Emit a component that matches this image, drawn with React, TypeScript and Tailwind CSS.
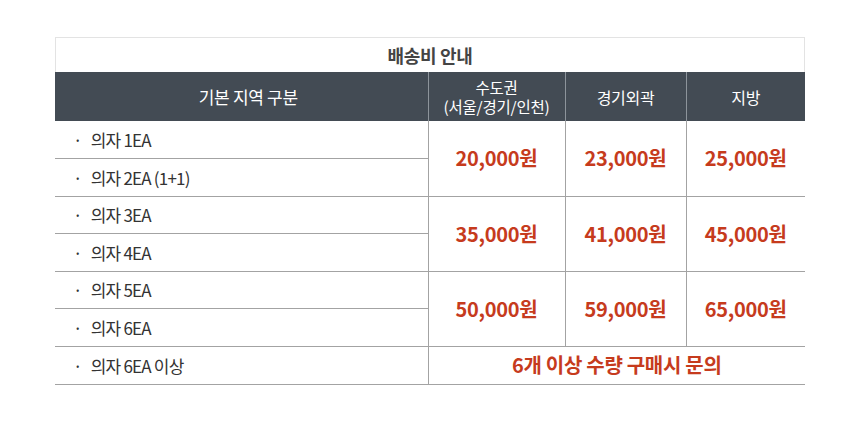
import React from "react";

type Group = {
  items: string[];
  prices: string[];
};

const groups: Group[] = [
  { items: ["의자 1EA", "의자 2EA (1+1)"], prices: ["20,000원", "23,000원", "25,000원"] },
  { items: ["의자 3EA", "의자 4EA"], prices: ["35,000원", "41,000원", "45,000원"] },
  { items: ["의자 5EA", "의자 6EA"], prices: ["50,000원", "59,000원", "65,000원"] },
];

const font = { fontFamily: '"Noto Sans CJK KR", "Noto Sans", sans-serif' };

export default function App() {
  return (
    <div className="min-h-[426px] w-[860px] bg-white pt-[37px] pl-[55px]" style={font}>
      <div className="w-[750px]">
        {/* title */}
        <div className="flex h-[35px] items-center justify-center border border-b-0 border-[#e3e3e3] text-[18px] font-bold text-[#444] tracking-[-0.3px]">
          배송비 안내
        </div>

        <table className="w-full table-fixed border-collapse">
          <colgroup>
            <col className="w-[373px]" />
            <col className="w-[137px]" />
            <col className="w-[121px]" />
            <col className="w-[119px]" />
          </colgroup>
          <thead>
            <tr className="h-[49px] bg-[#434b54] text-white">
              <th className="pl-[14px] text-[17px] font-normal tracking-[-0.3px]">기본 지역 구분</th>
              <th className="border-l border-[#8d949b] text-[15.5px] font-normal leading-[19px] tracking-[-0.2px]">
                <div>수도권</div>
                <div className="whitespace-nowrap">(서울/경기/인천)</div>
              </th>
              <th className="border-l border-[#8d949b] text-[16px] font-normal tracking-[-0.3px]">경기외곽</th>
              <th className="border-l border-[#8d949b] text-[16px] font-normal tracking-[-0.3px]">지방</th>
            </tr>
          </thead>
          <tbody>
            {groups.map((g) =>
              g.items.map((item, i) => (
                <tr key={item} className="h-[37.6px]">
                  <td className="border-b border-[#a3a3a3] pl-[18px] text-[17px] text-[#333] tracking-[-0.8px]">
                    <span className="mr-[9px]">·</span>
                    {item}
                  </td>
                  {i === 0 &&
                    g.prices.map((p) => (
                      <td
                        key={p}
                        rowSpan={2}
                        className="border-b border-l border-[#a3a3a3] text-center text-[20px] font-bold text-[#c63b1d] tracking-[-0.3px]"
                      >
                        {p}
                      </td>
                    ))}
                </tr>
              ))
            )}
            <tr className="h-[37.6px]">
              <td className="border-b border-[#a3a3a3] pl-[18px] text-[17px] text-[#333] tracking-[-0.8px]">
                <span className="mr-[9px]">·</span>
                의자 6EA 이상
              </td>
              <td
                colSpan={3}
                className="border-b border-l border-[#a3a3a3] text-center text-[20px] font-bold text-[#c63b1d] tracking-[-0.3px]"
              >
                6개 이상 수량 구매시 문의
              </td>
            </tr>
          </tbody>
        </table>
      </div>
    </div>
  );
}
